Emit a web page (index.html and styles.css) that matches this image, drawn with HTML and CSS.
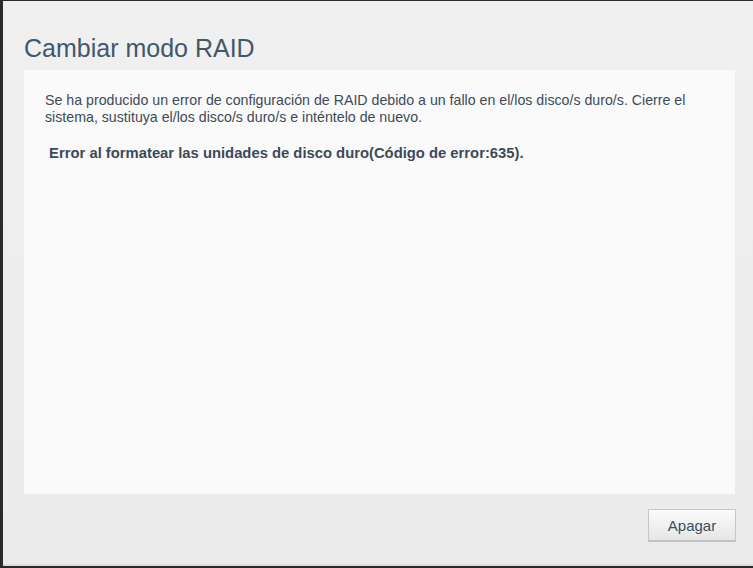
FILE: index.html
```html
<!DOCTYPE html>
<html>
<head>
<meta charset="utf-8">
<link rel="stylesheet" href="styles.css">
</head>
<body>
<div class="dialog">
  <h1 class="title">Cambiar modo RAID</h1>
  <div class="panel">
    <p class="msg">Se ha producido un error de configuración de RAID debido a un fallo en el/los disco/s duro/s. Cierre el sistema, sustituya el/los disco/s duro/s e inténtelo de nuevo.</p>
    <p class="err">&nbsp;Error al formatear las unidades de disco duro(Código de error:635).</p>
  </div>
  <div class="actions">
    <button class="btn">Apagar</button>
  </div>
</div>
</body>
</html>
```
FILE: styles.css
```css
html, body {
  margin: 0;
  padding: 0;
  height: 100%;
}
body {
  background: #2a2a2a;
  font-family: "Liberation Sans", Arial, sans-serif;
  padding: 1px 0 0 3px;
  box-sizing: border-box;
}
.dialog {
  height: 565px;
  background: linear-gradient(#f0f0f0, #ebebeb);
  border-bottom: 2px solid #dcdcdc;
  box-sizing: border-box;
  padding: 0 18px 0 21px;
  display: flex;
  flex-direction: column;
}
.title {
  margin: 0;
  padding: 33px 0 0 0;
  height: 69px;
  box-sizing: border-box;
  font-size: 25px;
  font-weight: normal;
  color: #43576b;
  line-height: 28px;
}
.panel {
  background: #fafafa;
  height: 424px;
  padding: 22px 21px 0 21px;
  box-sizing: border-box;
}
.msg {
  margin: 0;
  font-size: 14.2px;
  line-height: 17px;
  color: #3c4a58;
}
.err {
  margin: 19px 0 0 0;
  font-size: 14.8px;
  font-weight: bold;
  line-height: 17px;
  color: #3c4a58;
}
.actions {
  display: flex;
  justify-content: flex-end;
  padding-top: 15px;
}
.btn {
  width: 88px;
  height: 33px;
  border: 1px solid #c6c6c6;
  border-bottom: 2px solid #c2c2c2;
  background: linear-gradient(#fbfbfb, #e6e6e6);
  font-family: "Liberation Sans", Arial, sans-serif;
  font-size: 15px;
  color: #3b4e63;
  padding: 0;
  margin-right: -1px;
}
```
